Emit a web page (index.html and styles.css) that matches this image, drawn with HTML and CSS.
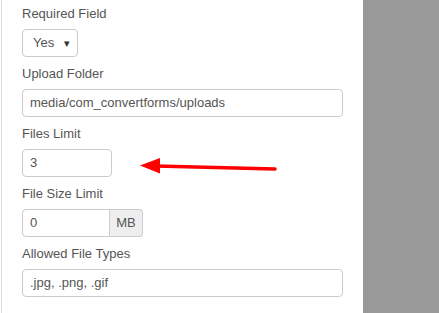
FILE: index.html
```html
<!DOCTYPE html>
<html lang="en">
<head>
    <meta charset="UTF-8">
    <title>Upload Field Options</title>
    <link rel="stylesheet" href="styles.css">
</head>
<body>
    <div class="layout">
        <div class="panel">
            <div class="field">
                <label>Required Field</label>
                <div class="select">Yes <span class="caret">&#9662;</span></div>
            </div>
            <div class="field">
                <label>Upload Folder</label>
                <div class="input wide">media/com_convertforms/uploads</div>
            </div>
            <div class="field">
                <label>Files Limit</label>
                <div class="input small">3</div>
            </div>
            <div class="field">
                <label>File Size Limit</label>
                <div class="input-group">
                    <div class="input grouped">0</div>
                    <span class="addon">MB</span>
                </div>
            </div>
            <div class="field">
                <label>Allowed File Types</label>
                <div class="input wide">.jpg, .png, .gif</div>
            </div>
        </div>
        <div class="side"></div>
    </div>

    <svg class="arrow" width="439" height="313" viewBox="0 0 439 313">
        <line x1="275" y1="169" x2="156" y2="166" stroke="#ff0000" stroke-width="3.5" stroke-linecap="round"/>
        <polygon points="140,165.5 160,158 160,173.5" fill="#ff0000"/>
    </svg>
</body>
</html>
```

FILE: styles.css
```css
body {
    margin: 0;
    padding: 0;
    font-family: "Liberation Sans", Arial, sans-serif;
    font-size: 13px;
    color: #555;
    background-color: #fff;
}

.layout {
    display: flex;
    height: 313px;
    overflow: hidden;
}

.panel {
    width: 362px;
    margin-left: 1px;
    border-left: 1px solid #ddd;
    padding: 5px 0 0 20px;
    box-sizing: border-box;
}

.side {
    flex: 1;
    background-color: #999;
}

.field {
    margin-bottom: 8px;
}

.field label {
    display: block;
    line-height: 18px;
    margin-bottom: 6px;
}

.select,
.input,
.addon {
    height: 28px;
    line-height: 26px;
    border: 1px solid #ccc;
    border-radius: 4px;
    box-sizing: border-box;
    background-color: #fff;
}

.select {
    width: 56px;
    padding-left: 10px;
}

.caret {
    font-size: 11px;
    margin-left: 6px;
    color: #333;
}

.input {
    padding-left: 7px;
}

.wide {
    width: 321px;
}

.small {
    width: 90px;
}

.input-group {
    display: flex;
}

.grouped {
    width: 88px;
    border-radius: 4px 0 0 4px;
}

.addon {
    width: 33px;
    border-left: none;
    border-radius: 0 4px 4px 0;
    background-color: #eee;
    text-align: center;
}

.arrow {
    position: absolute;
    left: 0;
    top: 0;
}
```
